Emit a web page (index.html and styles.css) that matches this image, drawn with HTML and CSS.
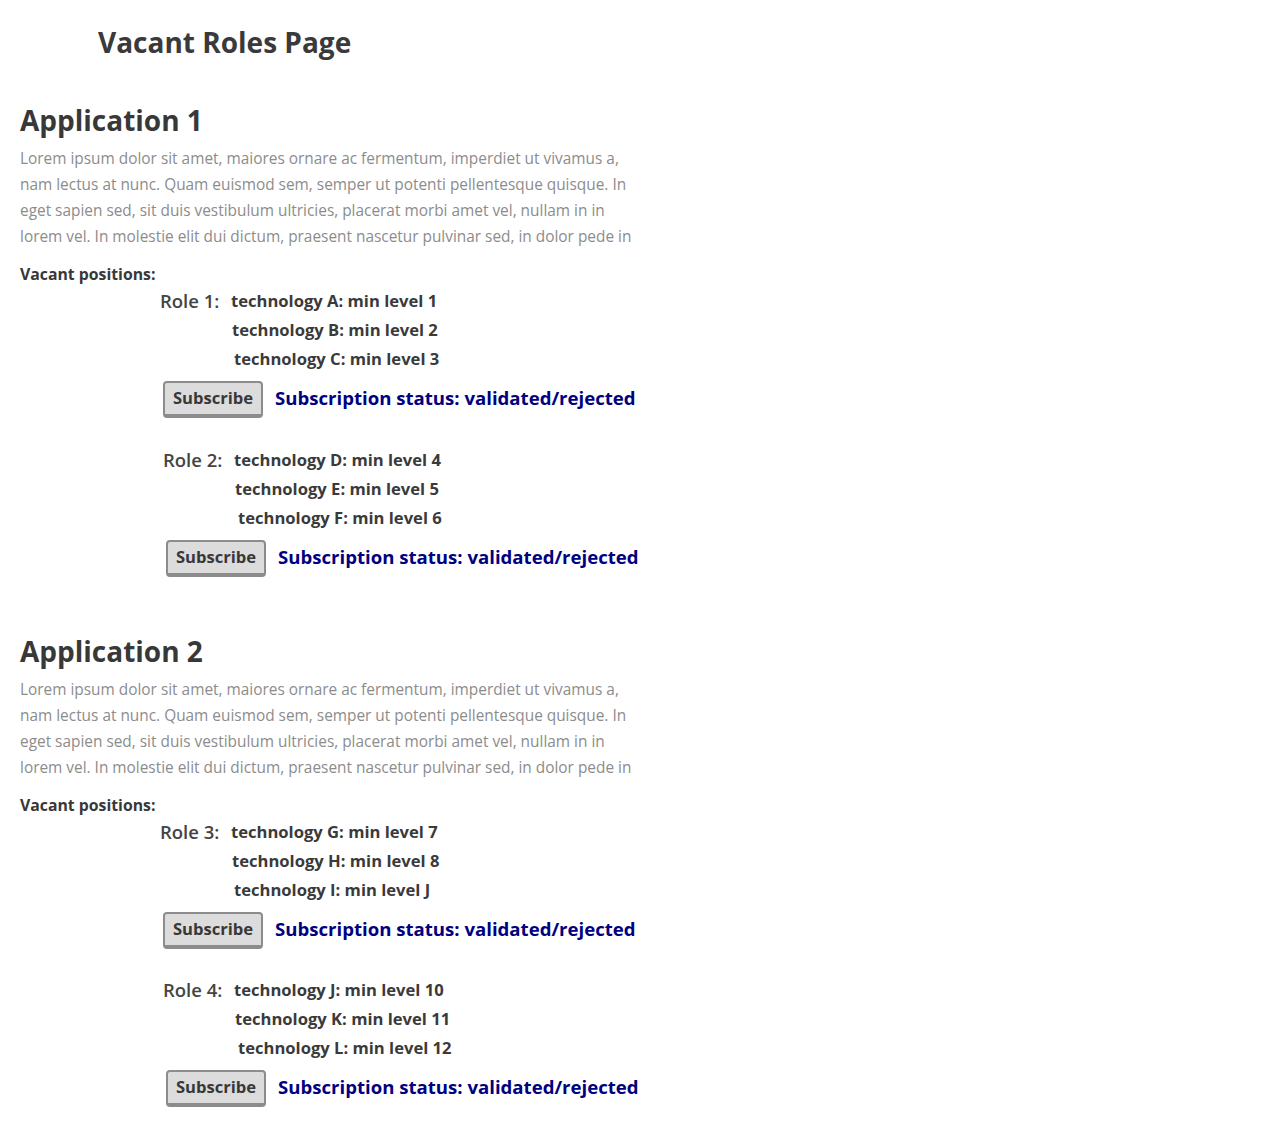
FILE: index.html
```html
<!DOCTYPE html>
<html>
<head>
<meta charset="utf-8">
<title>Vacant Roles Page</title>
<link rel="stylesheet" href="styles.css">
</head>
<body>
<h1 class="page-title">Vacant Roles Page</h1>

<section class="app app-first">
  <h2 class="app-title">Application 1</h2>
  <p class="app-desc">Lorem ipsum dolor sit amet, maiores ornare ac fermentum, imperdiet ut vivamus a,<br>nam lectus at nunc. Quam euismod sem, semper ut potenti pellentesque quisque. In<br>eget sapien sed, sit duis vestibulum ultricies, placerat morbi amet vel, nullam in in<br>lorem vel. In molestie elit dui dictum, praesent nascetur pulvinar sed, in dolor pede in</p>
  <div class="vacant">Vacant positions:</div>

  <div class="role role-a">
    <div class="role-head">
      <span class="role-name">Role 1:</span>
      <div class="techs">
        <div class="tech t1">technology A: min level 1</div>
        <div class="tech t2">technology B: min level 2</div>
        <div class="tech t3">technology C: min level 3</div>
      </div>
    </div>
    <div class="sub-row">
      <button class="sub-btn">Subscribe</button>
      <span class="status">Subscription status: validated/rejected</span>
    </div>
  </div>

  <div class="role role-b">
    <div class="role-head">
      <span class="role-name">Role 2:</span>
      <div class="techs">
        <div class="tech t1">technology D: min level 4</div>
        <div class="tech t2">technology E: min level 5</div>
        <div class="tech t3">technology F: min level 6</div>
      </div>
    </div>
    <div class="sub-row">
      <button class="sub-btn">Subscribe</button>
      <span class="status">Subscription status: validated/rejected</span>
    </div>
  </div>
</section>

<section class="app app-second">
  <h2 class="app-title">Application 2</h2>
  <p class="app-desc">Lorem ipsum dolor sit amet, maiores ornare ac fermentum, imperdiet ut vivamus a,<br>nam lectus at nunc. Quam euismod sem, semper ut potenti pellentesque quisque. In<br>eget sapien sed, sit duis vestibulum ultricies, placerat morbi amet vel, nullam in in<br>lorem vel. In molestie elit dui dictum, praesent nascetur pulvinar sed, in dolor pede in</p>
  <div class="vacant">Vacant positions:</div>

  <div class="role role-a">
    <div class="role-head">
      <span class="role-name">Role 3:</span>
      <div class="techs">
        <div class="tech t1">technology G: min level 7</div>
        <div class="tech t2">technology H: min level 8</div>
        <div class="tech t3">technology I: min level J</div>
      </div>
    </div>
    <div class="sub-row">
      <button class="sub-btn">Subscribe</button>
      <span class="status">Subscription status: validated/rejected</span>
    </div>
  </div>

  <div class="role role-b">
    <div class="role-head">
      <span class="role-name">Role 4:</span>
      <div class="techs">
        <div class="tech t1">technology J: min level 10</div>
        <div class="tech t2">technology K: min level 11</div>
        <div class="tech t3">technology L: min level 12</div>
      </div>
    </div>
    <div class="sub-row">
      <button class="sub-btn">Subscribe</button>
      <span class="status">Subscription status: validated/rejected</span>
    </div>
  </div>
</section>
</body>
</html>
```

FILE: styles.css
```css
html, body {
  margin: 0;
  padding: 0;
  background: #ffffff;
}
body {
  font-family: "Open Sans", Lato, "Liberation Sans", sans-serif;
  color: #383838;
  width: 1286px;
}
.page-title {
  margin: 25px 0 0 98px;
  font-size: 28px;
  line-height: 34px;
  font-weight: 700;
  color: #3a3a3a;
}
.app {
  padding-left: 20px;
}
.app-first {
  margin-top: 43px;
}
.app-second {
  margin-top: 56px;
}
.app-title {
  margin: 0;
  font-size: 28px;
  line-height: 36px;
  font-weight: 700;
  color: #383838;
}
.app-desc {
  margin: 8px 0 0 0;
  font-size: 15.4px;
  line-height: 26px;
  color: #8c8c8c;
  white-space: nowrap;
}
.vacant {
  margin-top: 14px;
  font-size: 15.8px;
  line-height: 20px;
  font-weight: 700;
  color: #383838;
}
.role {
  display: flex;
  flex-direction: column;
}
.role-a {
  margin-top: 2px;
  padding-left: 140px;
}
.role-b {
  margin-top: 27px;
  padding-left: 143px;
}
.app-second .role-b {
  margin-top: 26px;
}
.role-head {
  display: flex;
  align-items: flex-start;
}
.role-name {
  font-size: 18.5px;
  line-height: 29px;
  font-weight: 600;
  color: #444;
  width: 71px;
}
.techs {
  display: flex;
  flex-direction: column;
}
.tech {
  font-size: 16.6px;
  line-height: 29px;
  font-weight: 700;
  color: #3a3a3a;
}
.t2 { padding-left: 1px; }
.t3 { padding-left: 3px; }
.role-b .t2 { padding-left: 1px; }
.role-b .t3 { padding-left: 4px; }
.sub-row {
  display: flex;
  align-items: center;
  margin-top: 8px;
  gap: 12px;
}
.sub-btn {
  width: 100px;
  height: 37px;
  box-sizing: border-box;
  margin: 0 0 0 3px;
  padding: 0 0 3px 0;
  font-family: inherit;
  font-size: 16.6px;
  font-weight: 700;
  color: #383838;
  background: #dcdcdc;
  border: 2px solid #8c8c8c;
  border-bottom-width: 4px;
  border-radius: 4px;
}
.status {
  font-size: 18.6px;
  font-weight: 700;
  color: #000080;
  line-height: 30px;
  margin-bottom: 4px;
}
```
